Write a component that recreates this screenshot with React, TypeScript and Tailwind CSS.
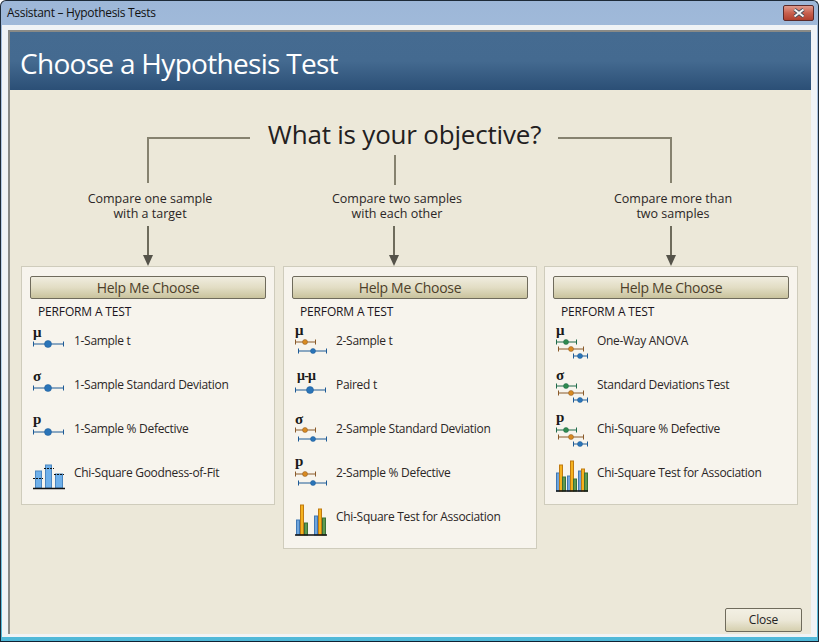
const font = "[font-family:'Open_Sans','Noto_Sans',sans-serif]";

function Range({ x1, x2, y, dot, r = 2.5, color, fill }: { x1: number; x2: number; y: number; dot: number; r?: number; color: string; fill: string }) {
  return (
    <g>
      <path d={`M${x1} ${y}H${x2}M${x1 + 0.5} ${y - 2.5}v5M${x2 - 0.5} ${y - 2.5}v5`} stroke={color} strokeWidth="1" fill="none" />
      <circle cx={dot} cy={y} r={r} fill={fill} stroke={color} strokeWidth="0.5" />
    </g>
  );
}

const blue = { color: "#1d5a96", fill: "#2a74b8" };
const orange = { color: "#8a5a2a", fill: "#d98a20" };
const green = { color: "#1f6b4a", fill: "#2f8a4e" };

function Letter({ s, y }: { s: string; y: number }) {
  return (
    <text x="0" y={y} fontFamily="'Liberation Serif', serif" fontSize="15" fontWeight="700" fill="#1a1a1a">
      {s}
    </text>
  );
}

function OneIcon({ s, y = 13 }: { s: string; y?: number }) {
  return (
    <svg width="32" height="34" viewBox="0 0 32 34" className="shrink-0 overflow-visible">
      <Letter s={s} y={y} />
      <Range x1={0} x2={31} y={20} dot={15} r={3.5} {...blue} />
    </svg>
  );
}

function TwoIcon({ s, y = 11 }: { s: string; y?: number }) {
  return (
    <svg width="32" height="34" viewBox="0 0 32 34" className="shrink-0 overflow-visible">
      <Letter s={s} y={y} />
      <Range x1={0} x2={21} y={18} dot={10} {...orange} />
      <Range x1={3} x2={32} y={27} dot={18} {...blue} />
    </svg>
  );
}

function PairedIcon() {
  return (
    <svg width="32" height="34" viewBox="0 0 32 34" className="shrink-0 overflow-visible">
      <text x="2" y="12" fontFamily="'Liberation Serif', serif" fontSize="14" fontWeight="700" textLength="19" fill="#1a1a1a">μ-μ</text>
      <Range x1={0} x2={31} y={22} dot={15} r={3.5} {...blue} />
    </svg>
  );
}

function ThreeIcon({ s, y = 11 }: { s: string; y?: number }) {
  return (
    <svg width="32" height="34" viewBox="0 0 32 34" className="shrink-0 overflow-visible">
      <Letter s={s} y={y} />
      <Range x1={0} x2={21} y={18} dot={10} {...green} />
      <Range x1={2} x2={28} y={25} dot={15} {...orange} />
      <Range x1={17} x2={32} y={32} dot={24} {...blue} />
    </svg>
  );
}

function Bar({ x, top, c }: { x: number; top: number; c: "b" | "o" | "g" }) {
  const fills = { b: "#6fa5dc", o: "#f5b21e", g: "#5f9a50" };
  const strokes = { b: "#3f78b4", o: "#c07a10", g: "#3a7036" };
  return <rect x={x + 0.5} y={top} width={3} height={38 - top} fill={fills[c]} stroke={strokes[c]} strokeWidth="1" />;
}

function BarsIcon({ bars }: { bars: [number, number, "b" | "o" | "g"][] }) {
  return (
    <svg width="32" height="40" viewBox="0 0 32 40" className="shrink-0">
      {bars.map(([x, top, c], i) => (
        <Bar key={i} x={x} top={top} c={c} />
      ))}
      <path d="M0 38H32" stroke="#111" strokeWidth="1.5" />
    </svg>
  );
}

function FitIcon() {
  return (
    <svg width="32" height="40" viewBox="0 0 32 40" className="shrink-0">
      <rect x="2.5" y="18" width="6" height="17" fill="#6fb0ea" stroke="#4a86c0" />
      <rect x="12.5" y="12" width="6" height="23" fill="#6fb0ea" stroke="#4a86c0" />
      <rect x="22.5" y="21" width="7" height="14" fill="#6fb0ea" stroke="#4a86c0" />
      <path d="M0 25.5H10M11 15.5H21M21 21.5H31" stroke="#111" strokeWidth="1" strokeDasharray="2 1" />
      <path d="M0 35.5H32" stroke="#111" strokeWidth="1.5" />
    </svg>
  );
}

function TestRow({ icon, label }: { icon: React.ReactNode; label: string }) {
  return (
    <div className="flex h-[44px] items-center gap-[9px] pl-[3px]">
      <div className="flex w-[32px] justify-center">{icon}</div>
      <span className="pb-[1px] text-[12px] tracking-[-0.3px] text-[#2b2626]">{label}</span>
    </div>
  );
}

function Panel({ rows, className }: { rows: { icon: React.ReactNode; label: string }[]; className: string }) {
  return (
    <div className={`w-[254px] border border-[#cfccbc] bg-[#f7f4ed] px-[8px] pt-[9px] pb-[9px] ${className}`}>
      <button className="flex h-[23px] w-[236px] items-center justify-center rounded-[2px] border border-[#6f6b5c] bg-gradient-to-b from-[#f0eddf] via-[#e2ddc4] to-[#c9c39d] pb-[1px] text-[14px] tracking-[-0.3px] text-[#4d3f2a]">
        Help Me Choose
      </button>
      <div className="mt-[4px] pl-[8px] text-[12px] leading-[18px] tracking-[-0.15px] text-[#1c1420]">PERFORM A TEST</div>
      <div className="-mt-[2px]">
        {rows.map((r) => (
          <TestRow key={r.label} icon={r.icon} label={r.label} />
        ))}
      </div>
    </div>
  );
}

function Stem({ className }: { className: string }) {
  return <div className={`absolute bg-[#86826f] ${className}`} />;
}

function Arrow({ className }: { className: string }) {
  return (
    <svg width="12" height="40" viewBox="0 0 12 40" className={`absolute ${className}`}>
      <path d="M6 0V30" stroke="#6e6b5c" strokeWidth="2" />
      <path d="M1 29H11L6 40Z" fill="#55534a" />
    </svg>
  );
}

export default function App() {
  const cols = [
    {
      label: ["Compare one sample", "with a target"],
      rows: [
        { icon: <OneIcon s="μ" />, label: "1-Sample t" },
        { icon: <OneIcon s="σ" />, label: "1-Sample Standard Deviation" },
        { icon: <OneIcon s="p" y={12} />, label: "1-Sample % Defective" },
        { icon: <FitIcon />, label: "Chi-Square Goodness-of-Fit" },
      ],
    },
    {
      label: ["Compare two samples", "with each other"],
      rows: [
        { icon: <TwoIcon s="μ" />, label: "2-Sample t" },
        { icon: <PairedIcon />, label: "Paired t" },
        { icon: <TwoIcon s="σ" y={12} />, label: "2-Sample Standard Deviation" },
        { icon: <TwoIcon s="p" y={10} />, label: "2-Sample % Defective" },
        {
          icon: (
            <BarsIcon
              bars={[[1, 23, "b"], [5, 8, "o"], [9, 26, "g"], [19, 19, "b"], [23, 12, "o"], [27, 21, "g"]]}
            />
          ),
          label: "Chi-Square Test for Association",
        },
      ],
    },
    {
      label: ["Compare more than", "two samples"],
      rows: [
        { icon: <ThreeIcon s="μ" />, label: "One-Way ANOVA" },
        { icon: <ThreeIcon s="σ" y={12} />, label: "Standard Deviations Test" },
        { icon: <ThreeIcon s="p" y={10} />, label: "Chi-Square % Defective" },
        {
          icon: (
            <BarsIcon
              bars={[
                [0, 20, "b"], [3, 12, "o"], [6, 24, "g"],
                [11, 23, "b"], [14, 8, "o"], [17, 26, "g"],
                [22, 18, "b"], [25, 16, "o"], [28, 20, "g"],
              ]}
            />
          ),
          label: "Chi-Square Test for Association",
        },
      ],
    },
  ];

  return (
    <div className={`${font} flex h-[642px] w-[819px] flex-col overflow-hidden rounded-t-[6px] border border-[#1d2a38] border-b-[#123] bg-gradient-to-b from-[#9db7d8] via-[#c4d6ea] to-[#4fb8d8]`}>
      <div className="flex h-[24px] shrink-0 items-center justify-between pl-[6px] pr-[4px]">
        <span className="text-[12px] tracking-[-0.3px] text-[#111]">Assistant – Hypothesis Tests</span>
        <button className="flex h-[16px] w-[31px] items-center justify-center rounded-[2px] border border-[#5a2a2a] bg-gradient-to-b from-[#e09a8c] via-[#c8604e] to-[#b0402e]">
          <svg width="14" height="10" viewBox="0 0 14 10">
            <path d="M2.5 1.5L11.5 8.5M11.5 1.5L2.5 8.5" stroke="#3f4a58" strokeWidth="3.5" />
            <path d="M2.5 1.5L11.5 8.5M11.5 1.5L2.5 8.5" stroke="#f4f4f4" strokeWidth="2" />
          </svg>
        </button>
      </div>

      <div className="mx-[1px] mb-[4px] flex min-h-0 flex-1 flex-col bg-[#f0f3f6] px-[6px] pt-[5px] pb-[3px]">
        <div className="flex min-h-0 flex-1 flex-col border-t-2 border-l-2 border-t-[#8a8a86] border-l-[#8a8a86] bg-[#ece8d9]">
          <div className="flex h-[58px] shrink-0 items-center bg-gradient-to-b from-[#456b91] via-[#446a90] to-[#2b4f76] pl-[10px] pt-[3px]">
            <h1 className="text-[28px] tracking-[-0.7px] text-white">Choose a Hypothesis Test</h1>
          </div>

          <div className="relative h-[176px] shrink-0">
            <div className="pt-[25px] pr-[12px] text-center text-[26px] leading-[38px] tracking-[-0.2px] text-[#23201e]">What is your objective?</div>
            <div className="mt-[38px] flex text-center text-[12.5px] leading-[15px] text-[#2b2626]">
              {cols.map((c, i) => (
                <div key={i} className={i === 0 ? "w-[280px]" : i === 1 ? "w-[214px]" : "ml-[37px] w-[264px]"}>
                  <div>{c.label[0]}</div>
                  <div>{c.label[1]}</div>
                </div>
              ))}
            </div>
            <Stem className="left-[137px] top-[47px] h-[2px] w-[103px]" />
            <Stem className="left-[137px] top-[47px] h-[46px] w-[2px]" />
            <Stem className="left-[384px] top-[65px] h-[30px] w-[2px]" />
            <Stem className="left-[548px] top-[47px] h-[2px] w-[114px]" />
            <Stem className="left-[660px] top-[47px] h-[46px] w-[2px]" />
            <Arrow className="left-[132px] top-[136px]" />
            <Arrow className="left-[378px] top-[136px]" />
            <Arrow className="left-[655px] top-[136px]" />
          </div>

          <div className="flex min-h-0 flex-1 items-start pl-[11px]">
            <Panel rows={cols[0].rows} className="" />
            <Panel rows={cols[1].rows} className="ml-[8px]" />
            <Panel rows={cols[2].rows} className="ml-[7px]" />
          </div>

          <div className="flex shrink-0 justify-end pr-[9px] pb-[2px]">
            <button className="flex h-[24px] w-[77px] items-center justify-center rounded-[2px] border border-[#6f6b5c] bg-gradient-to-b from-[#f3f0e4] via-[#ece8d8] to-[#d5cfae] text-[12px] tracking-[-0.2px] text-[#222]">
              Close
            </button>
          </div>
        </div>
      </div>
    </div>
  );
}
